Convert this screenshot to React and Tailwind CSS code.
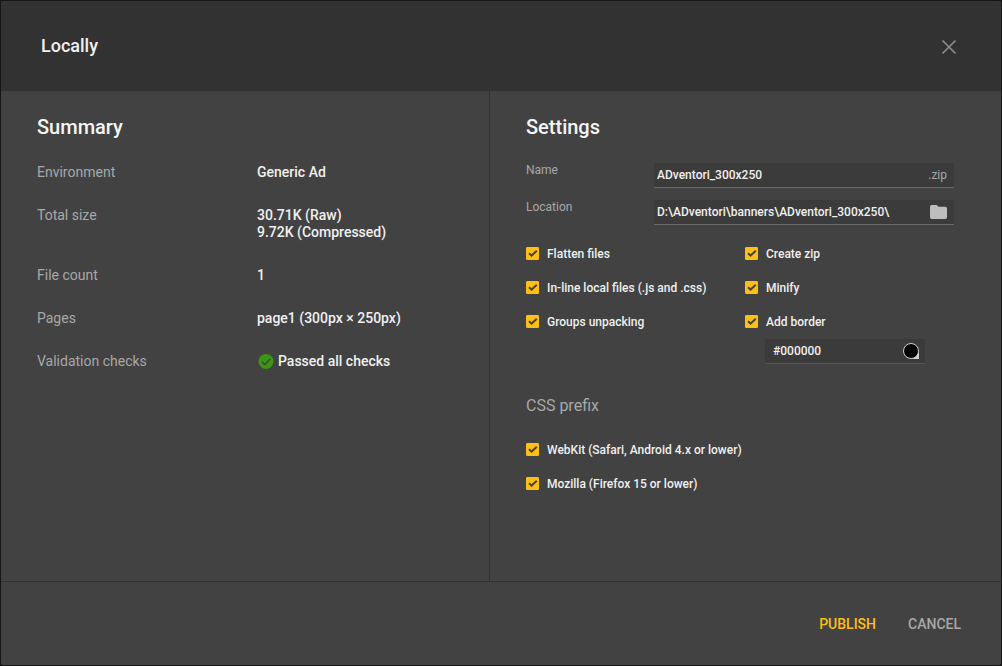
import { useState } from 'react';

function Checkbox({ id, label, checked, onChange }) {
  return (
    <div className="flex items-start h-4">
      <span className="relative mt-px w-[13px] h-[13px] shrink-0">
        <input
          id={id}
          type="checkbox"
          checked={checked}
          onChange={onChange}
          className="peer block appearance-none w-[13px] h-[13px] rounded-[1px] border border-[#8a8a8a] checked:border-[#fdbf16] checked:bg-[#fdbf16] cursor-pointer"
        />
        <svg
          viewBox="0 0 13 13"
          className="absolute inset-0 w-[13px] h-[13px] hidden peer-checked:block pointer-events-none"
          fill="none"
          stroke="#4a4538"
          strokeWidth="2"
        >
          <path d="M3 6.2 5.6 8.6 10.8 3.8" />
        </svg>
      </span>
      <label htmlFor={id} className="pl-2 text-xs leading-4 font-medium text-[#f0f0f0] whitespace-nowrap cursor-pointer">
        {label}
      </label>
    </div>
  );
}

function SummaryRow({ label, children }) {
  return (
    <div className="flex text-sm leading-[17px]">
      <dt className="w-[220px] shrink-0 text-[#a8a8a8]">{label}</dt>
      <dd className="font-medium text-[#f0f0f0]">{children}</dd>
    </div>
  );
}

function Field({ id, label, value, onChange, children }) {
  return (
    <div className="flex justify-between">
      <label htmlFor={id} className="text-xs leading-[14px] text-[#a8a8a8]">
        {label}
      </label>
      <div className="flex items-center w-[300px] h-[25px] bg-[#3b3b3b] border-b border-[#696969] pl-[3px] pr-[7px]">
        <input
          id={id}
          type="text"
          value={value}
          onChange={onChange}
          className="flex-1 min-w-0 bg-transparent text-xs font-medium text-[#f0f0f0] focus:outline-none"
        />
        {children}
      </div>
    </div>
  );
}

export default function App() {
  const [name, setName] = useState('ADventori_300x250');
  const [location, setLocation] = useState('D:\\ADventori\\banners\\ADventori_300x250\\');
  const [borderColor, setBorderColor] = useState('#000000');
  const [options, setOptions] = useState({
    flatten: true,
    inline: true,
    groups: true,
    zip: true,
    minify: true,
    border: true,
    webkit: true,
    mozilla: true,
  });

  const checkbox = (key, label) => (
    <Checkbox
      id={key}
      label={label}
      checked={options[key]}
      onChange={() => setOptions({ ...options, [key]: !options[key] })}
    />
  );

  return (
    <div className="min-h-screen flex flex-col bg-[#161616] p-px font-['Roboto',sans-serif]">
      <div className="flex-1 flex flex-col bg-[#424242] rounded-[2px] overflow-hidden">
        {/* Header */}
        <header className="flex items-center justify-between h-[90px] shrink-0 bg-[#323232] pl-10 pr-11">
          <h1 className="text-lg font-medium text-[#f0f0f0]">Locally</h1>
          <button type="button" aria-label="Close" className="pt-0.5 text-[#8c8c8c] cursor-pointer">
            <svg viewBox="0 0 16 16" className="w-4 h-4" fill="none" stroke="currentColor" strokeWidth="1.7">
              <path d="M1.5 1.5 14.5 14.5M14.5 1.5 1.5 14.5" />
            </svg>
          </button>
        </header>

        <main className="flex-1 grid grid-cols-[488fr_512fr]">
          {/* Summary */}
          <section className="px-9 py-6">
            <h2 className="text-xl leading-6 font-medium text-[#f5f5f5]">Summary</h2>
            <dl className="mt-[25px] flex flex-col gap-[26px]">
              <SummaryRow label="Environment">Generic Ad</SummaryRow>
              <SummaryRow label="Total size">
                30.71K (Raw)
                <br />
                9.72K (Compressed)
              </SummaryRow>
              <SummaryRow label="File count">1</SummaryRow>
              <SummaryRow label="Pages">page1 (300px × 250px)</SummaryRow>
              <SummaryRow label="Validation checks">
                <span className="flex items-center gap-[3px]">
                  <svg viewBox="0 0 18 18" className="w-[18px] h-[17px]" fill="none">
                    <circle cx="9" cy="9" r="8" fill="#3b9613" />
                    <path d="M4.8 9.2 7.8 12.1 13.3 6.3" stroke="#424242" strokeWidth="1.6" />
                  </svg>
                  Passed all checks
                </span>
              </SummaryRow>
            </dl>
          </section>

          {/* Settings */}
          <section className="border-l border-[#323232] pl-9 pr-[47px] py-6">
            <h2 className="text-xl leading-6 font-medium text-[#f5f5f5]">Settings</h2>
            <div className="mt-6 flex flex-col gap-3">
              <Field id="name" label="Name" value={name} onChange={(e) => setName(e.target.value)}>
                <span className="text-xs text-[#a8a8a8]">.zip</span>
              </Field>
              <Field id="location" label="Location" value={location} onChange={(e) => setLocation(e.target.value)}>
                <button type="button" aria-label="Browse folders" className="text-[#bdbdbd] cursor-pointer">
                  <svg viewBox="0 0 17 14" className="w-[17px] h-[14px]" fill="currentColor">
                    <path d="M1.7 0H6.8L8.5 1.7H15.3A1.7 1.7 0 0 1 17 3.4V12.3A1.7 1.7 0 0 1 15.3 14H1.7A1.7 1.7 0 0 1 0 12.3V1.7A1.7 1.7 0 0 1 1.7 0Z" />
                  </svg>
                </button>
              </Field>
            </div>

            <div className="mt-[21px] flex">
              <div className="w-[219px] shrink-0 flex flex-col gap-[18px]">
                {checkbox('flatten', 'Flatten files')}
                {checkbox('inline', 'In-line local files (.js and .css)')}
                {checkbox('groups', 'Groups unpacking')}
              </div>
              <div>
                <div className="flex flex-col gap-[18px]">
                  {checkbox('zip', 'Create zip')}
                  {checkbox('minify', 'Minify')}
                  {checkbox('border', 'Add border')}
                </div>
                <div className="mt-[9px] ml-5 flex items-center w-40 h-[25px] bg-[#3b3b3b] border-b border-[#555555] pl-2 pr-[5px]">
                  <input
                    type="text"
                    aria-label="Border color"
                    value={borderColor}
                    onChange={(e) => setBorderColor(e.target.value)}
                    className="flex-1 min-w-0 bg-transparent text-xs font-medium text-[#f0f0f0] focus:outline-none"
                  />
                  <button type="button" aria-label="Pick color" className="cursor-pointer">
                    <svg viewBox="0 0 17 17" className="w-[17px] h-[17px]">
                      <path d="M16 9V16H9Z" fill="#d0d0d0" />
                      <circle cx="8" cy="8" r="7.5" fill={borderColor} stroke="#d0d0d0" strokeWidth="1" />
                    </svg>
                  </button>
                </div>
              </div>
            </div>

            <h3 className="mt-8 text-base leading-5 text-[#a8a8a8]">CSS prefix</h3>
            <div className="mt-[26px] flex flex-col gap-[18px]">
              {checkbox('webkit', 'WebKit (Safari, Android 4.x or lower)')}
              {checkbox('mozilla', 'Mozilla (Firefox 15 or lower)')}
            </div>
          </section>
        </main>

        {/* Footer */}
        <footer className="flex items-center justify-end gap-8 h-[84px] shrink-0 border-t border-[#323232] px-10 text-sm font-medium">
          <button type="button" className="text-[#fdbf16] cursor-pointer">
            PUBLISH
          </button>
          <button type="button" className="text-[#a8a8a8] cursor-pointer">
            CANCEL
          </button>
        </footer>
      </div>
    </div>
  );
}
